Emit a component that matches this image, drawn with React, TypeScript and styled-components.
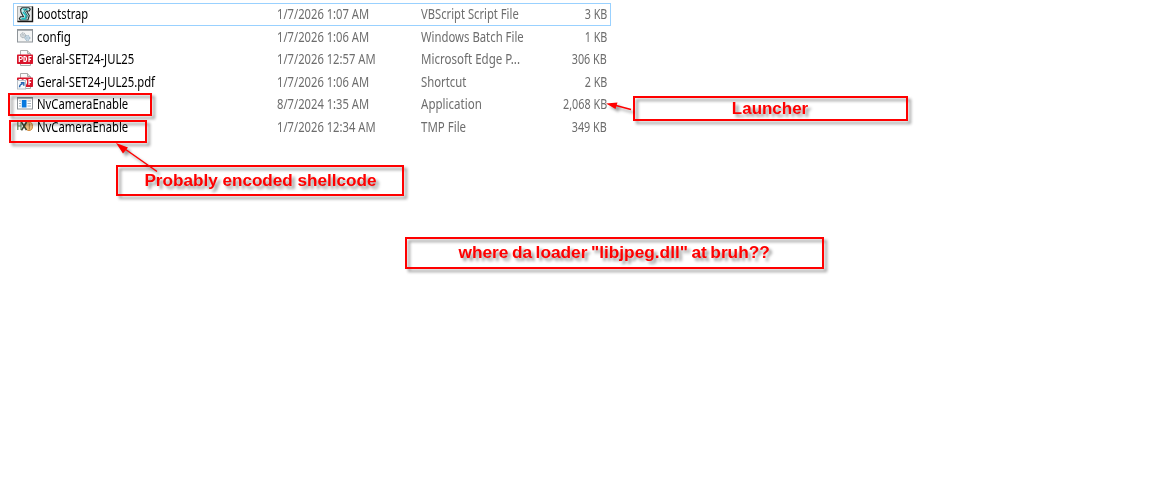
import React from "react";
import { styled, createGlobalStyle } from "styled-components";

type IconKind = "script" | "batch" | "pdf" | "shortcut" | "app" | "tmp";

const files: { icon: IconKind; name: string; date: string; type: string; size: string; nameScale: number; typeScale: number }[] = [
    { icon: "script", name: "bootstrap", date: "1/7/2026 1:07 AM", type: "VBScript Script File", size: "3 KB", nameScale: 0.825, typeScale: 0.83 },
    { icon: "batch", name: "config", date: "1/7/2026 1:06 AM", type: "Windows Batch File", size: "1 KB", nameScale: 0.86, typeScale: 0.84 },
    { icon: "pdf", name: "Geral-SET24-JUL25", date: "1/7/2026 12:57 AM", type: "Microsoft Edge P...", size: "306 KB", nameScale: 0.835, typeScale: 0.855 },
    { icon: "shortcut", name: "Geral-SET24-JUL25.pdf", date: "1/7/2026 1:06 AM", type: "Shortcut", size: "2 KB", nameScale: 0.835, typeScale: 0.84 },
    { icon: "app", name: "NvCameraEnable", date: "8/7/2024 1:35 AM", type: "Application", size: "2,068 KB", nameScale: 0.835, typeScale: 0.855 },
    { icon: "tmp", name: "NvCameraEnable", date: "1/7/2026 12:34 AM", type: "TMP File", size: "349 KB", nameScale: 0.835, typeScale: 0.85 },
];

const PdfPage = () => (
    <>
        <path d="M3.5 6V.5h7l3 3V15.5h-10V12" fill="#fafafa" stroke="#aaa" />
        <path d="M10.5.5v3h3" fill="#ddd" stroke="#aaa" />
        <rect x="0" y="4.5" width="16" height="9.5" rx=".7" fill="#d9152b" />
        <path d="M2.3 12V6.5h1.5a1.4 1.4 0 0 1 0 3H2.3M7 6.5v5h.8q1.7 0 1.7-2.5T7.8 6.5zM12 12V6.5h2.5M12 9.3h2" fill="none" stroke="#fff" strokeWidth="1.2" />
    </>
);

const FileIcon = ({ kind }: { kind: IconKind }) => (
    <Icon viewBox="0 0 16 16">
        {kind === "script" && (
            <>
                <rect x=".5" y=".5" width="15" height="15" fill="#e5e7e7" stroke="#a9adad" />
                <path d="M.5 15.5h15V.5" fill="none" stroke="#181818" strokeWidth="1.4" />
                <path d="M5 1.8h7l1.3 1.2-1 2H9.5l2.8 4.5-1.3 4.5H3.3l-1-1.3 1.2-2h3L4 6.3 3.6 3.5z" fill="#c8eeee" stroke="#263030" strokeWidth="1.1" />
                <path d="M6 3.5h4.5M6 6l3 3.5-.8 3.2H4.5" fill="none" stroke="#21bdc1" strokeWidth="1.6" />
                <path d="M9.5 2.5 7.5 5l2.8 4.5-.8 3" fill="none" stroke="#163b3d" strokeWidth=".8" />
            </>
        )}
        {kind === "batch" && (
            <g transform="translate(0 1)">
                <rect x=".5" y=".5" width="15" height="12.5" fill="#f4f5f5" stroke="#8e9499" />
                <path d="M1 1.5h14" stroke="#a8adb1" />
                <circle cx="6" cy="6.3" r="2.4" fill="#e3e8eb" stroke="#929da4" strokeDasharray="1.2 .6" />
                <circle cx="6" cy="6.3" r=".9" fill="#fff" stroke="#929da4" strokeWidth=".6" />
                <circle cx="10.4" cy="9" r="2.4" fill="#dcebf5" stroke="#7e9db3" strokeDasharray="1.2 .6" />
                <circle cx="10.4" cy="9" r=".9" fill="#fff" stroke="#7e9db3" strokeWidth=".6" />
            </g>
        )}
        {kind === "pdf" && (
            <g transform="translate(0 -1)">
                <PdfPage />
            </g>
        )}
        {kind === "shortcut" && (
            <g transform="translate(0 -1)">
                <PdfPage />
                <rect x=".5" y="7.5" width="8" height="8.5" fill="#f7f9fb" stroke="#b9c0c8" />
                <path d="M2.5 14.3q0-3 3.2-3.4M3.8 9.8h3v3" fill="none" stroke="#2765b0" strokeWidth="1.4" />
            </g>
        )}
        {kind === "app" && (
            <>
                <rect x=".5" y="1.5" width="15" height="11.5" fill="#fff" stroke="#8e9499" />
                <path d="M1 2.5h14" stroke="#b4b8bb" />
                <rect x="4.8" y="4" width="4.7" height="7.5" fill="#0879df" />
                <path d="M2 5h2M2 7.5h2M2 10h2M10.5 5H14M10.5 7.5H14M10.5 10H14" stroke="#a3b1bb" />
            </>
        )}
        {kind === "tmp" && (
            <>
                <path d="M.8 3v8M4 3v8M.8 7H4" fill="none" stroke="#63855c" strokeWidth="1.2" />
                <ellipse cx="12" cy="7.3" rx="3.5" ry="4.2" fill="#eec184" stroke="#cf8939" />
                <path d="M4.5 3.2l5 8M9.5 3l-5 8.3" stroke="#39432f" strokeWidth="1.5" />
                <path d="M12.3 4.5v6" stroke="#a9763d" />
            </>
        )}
    </Icon>
);

const App = () => {
    return (
        <>
            <GlobalStyle />
            <Page>
                <FileList>
                    {files.map((file, i) => (
                        <Row key={i} $selected={i === 0}>
                            <FileIcon kind={file.icon} />
                            <Name $scale={file.nameScale}>{file.name}</Name>
                            <Detail $scale={0.83}>{file.date}</Detail>
                            <Detail $scale={file.typeScale}>{file.type}</Detail>
                            <Size $scale={0.8}>{file.size}</Size>
                        </Row>
                    ))}
                </FileList>
                <Callout $x={8} $y={93} $w={144} $h={23} />
                <Callout $x={9} $y={120} $w={138} $h={23} />
                <Callout $x={633} $y={96} $w={275} $h={25}>
                    <Label $scale={1.06}>Launcher</Label>
                </Callout>
                <Callout $x={116} $y={165} $w={288} $h={31}>
                    <Label $scale={1.07}>Probably encoded shellcode</Label>
                </Callout>
                <Callout $x={405} $y={237} $w={419} $h={32}>
                    <Label $scale={1.08} $wordGap={-1.2}>where da loader "libjpeg.dll" at bruh??</Label>
                </Callout>
                <Arrows viewBox="0 0 1151 490">
                    <path d="M631 109.5 616 105.5M157 171.5 125 149" stroke="red" strokeWidth="1.5" />
                    <path d="M606 103.5 617.5 102.5 615.5 109zM116 143 128 147.5 123 153.5z" fill="red" />
                </Arrows>
            </Page>
        </>
    )
}

const GlobalStyle = createGlobalStyle`
    body {
        margin: 0;
        background: #fff;
        overflow: hidden;
    }
`

const Page = styled.main`
    position: relative;
    box-sizing: border-box;
    width: 1151px;
    height: 490px;
    padding: 3px 0 0 13px;
    font-family: "Noto Sans", "Open Sans", sans-serif;
    font-size: 13.5px;
`

const FileList = styled.section`
    width: 598px;
    display: grid;
    grid-auto-rows: 22.6px;
`

const Row = styled.div<{ $selected: boolean }>`
    box-sizing: border-box;
    display: grid;
    grid-template-columns: 20px 240px 144px 110px 1fr;
    align-items: center;
    padding: 0 3px;
    border: 1px solid ${({ $selected }) => ($selected ? "#99d1ff" : "transparent")};
    line-height: 19px;
    white-space: nowrap;
`

const Icon = styled.svg`
    width: 16px;
    height: 16px;
    margin-top: -1px;
    overflow: visible;
`

const Detail = styled.span<{ $scale: number }>`
    justify-self: start;
    margin-top: .5px;
    color: #6d6d6d;
    transform: scaleX(${({ $scale }) => $scale});
    transform-origin: left;
`

const Name = styled(Detail)`
    color: #000;
`

const Size = styled(Detail)`
    justify-self: end;
    transform-origin: right;
`

const Callout = styled.div<{ $x: number; $y: number; $w: number; $h: number }>`
    position: absolute;
    left: ${({ $x }) => $x}px;
    top: ${({ $y }) => $y}px;
    box-sizing: border-box;
    width: ${({ $w }) => $w}px;
    height: ${({ $h }) => $h}px;
    display: flex;
    align-items: center;
    justify-content: center;
    border: 2px solid #f00;
    filter: drop-shadow(3px 3px 1.5px rgba(0, 0, 0, .4));
`

const Label = styled.span<{ $scale: number; $wordGap?: number }>`
    color: #f00;
    font: bold 16px/20px "Liberation Sans", sans-serif;
    word-spacing: ${({ $wordGap = 0 }) => $wordGap}px;
    white-space: nowrap;
    transform: scaleX(${({ $scale }) => $scale});
`

const Arrows = styled.svg`
    position: absolute;
    inset: 0;
    filter: drop-shadow(3px 3px 1.5px rgba(0, 0, 0, .4));
`

export default App;
